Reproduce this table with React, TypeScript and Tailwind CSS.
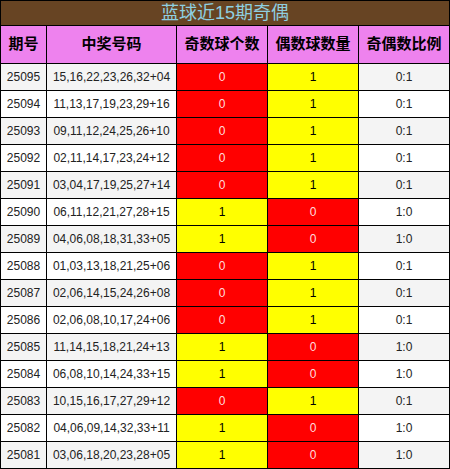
import React from 'react';

type Row = [string, string, number, number];

const ROWS: Row[] = [
  ['25095', '15,16,22,23,26,32+04', 0, 1],
  ['25094', '11,13,17,19,23,29+16', 0, 1],
  ['25093', '09,11,12,24,25,26+10', 0, 1],
  ['25092', '02,11,14,17,23,24+12', 0, 1],
  ['25091', '03,04,17,19,25,27+14', 0, 1],
  ['25090', '06,11,12,21,27,28+15', 1, 0],
  ['25089', '04,06,08,18,31,33+05', 1, 0],
  ['25088', '01,03,13,18,21,25+06', 0, 1],
  ['25087', '02,06,14,15,24,26+08', 0, 1],
  ['25086', '02,06,08,10,17,24+06', 0, 1],
  ['25085', '11,14,15,18,21,24+13', 1, 0],
  ['25084', '06,08,10,14,24,33+15', 1, 0],
  ['25083', '10,15,16,17,27,29+12', 0, 1],
  ['25082', '04,06,09,14,32,33+11', 1, 0],
  ['25081', '03,06,18,20,23,28+05', 1, 0],
];

const HEADERS = ['期号', '中奖号码', '奇数球个数', '偶数球数量', '奇偶数比例'];

const font = "font-['Liberation_Sans','Noto_Sans_CJK_SC',sans-serif]";

const App: React.FC = () => {
  return (
    <div className={`w-[450px] ${font}`}>
      <div className="grid grid-cols-[45px_129px_90px_90px_90px] gap-px bg-black p-px">
        {/* Title */}
        <div className="col-span-5 h-[24px] bg-[#674423] flex items-center justify-center text-[18px] text-[#8ecfe0]">
          蓝球近15期奇偶
        </div>

        {/* Header */}
        {HEADERS.map(h => (
          <div key={h} className="h-[37px] bg-[#ee82ee] flex items-center justify-center text-[15px] font-bold text-black">
            {h}
          </div>
        ))}

        {/* Body */}
        {ROWS.map(([issue, nums, odd, even], i) => {
          const bg = i % 2 === 0 ? 'bg-[#f4f4f4]' : 'bg-white';
          const cell = 'h-[26px] flex items-center justify-center text-[12px]';
          const color = (v: number) =>
            v === 1 ? 'bg-[#ffff00] text-black' : 'bg-[#ff0000] text-[#ffdede]';
          return (
            <React.Fragment key={issue}>
              <div className={`${cell} ${bg} text-[#222]`}>{issue}</div>
              <div className={`${cell} ${bg} text-[#222]`}>{nums}</div>
              <div className={`${cell} ${color(odd)}`}>{odd}</div>
              <div className={`${cell} ${color(even)}`}>{even}</div>
              <div className={`${cell} ${bg} text-[#222]`}>{odd}:{even}</div>
            </React.Fragment>
          );
        })}
      </div>
    </div>
  );
};

export default App;
